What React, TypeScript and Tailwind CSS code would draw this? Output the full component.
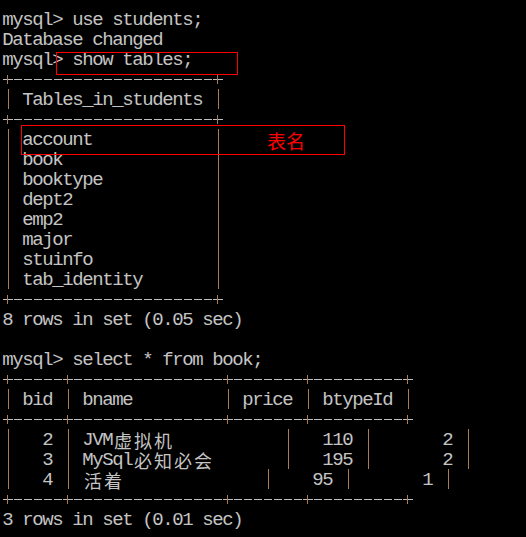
import React from "react";

const lines: string[] = [
  "mysql> use students;",
  "Database changed",
  "mysql> show tables;",
  "+--------------------+",
  "| Tables_in_students |",
  "+--------------------+",
  "| account            |",
  "| book               |",
  "| booktype           |",
  "| dept2              |",
  "| emp2               |",
  "| major              |",
  "| stuinfo            |",
  "| tab_identity       |",
  "+--------------------+",
  "8 rows in set (0.05 sec)",
  "",
  "mysql> select * from book;",
  "+-----+---------------+-------+---------+",
  "| bid | bname         | price | btypeId |",
  "+-----+---------------+-------+---------+",
  "|   2 | JVM虚拟机           |   110 |       2 |",
  "|   3 | MySql必知必会       |   195 |       2 |",
  "|   4 | 活着              |    95 |       1 |",
  "+-----+---------------+-------+---------+",
  "3 rows in set (0.01 sec)",
];

const isWide = (c: string) => /[\u2e80-\u9fff\uf900-\ufaff\uff00-\uffef]/.test(c);

function Cell({ c }: { c: string }) {
  if (c === "|") {
    return (
      <span className="flex h-[20px] w-[10px] shrink-0 justify-center">
        <span className="h-[20px] w-px bg-[#a97c55]" />
      </span>
    );
  }
  if (c === "-") {
    return (
      <span className="flex h-[20px] w-[10px] shrink-0 items-center justify-center">
        <span className="h-px w-[8px] bg-[#c0c0c0]" />
      </span>
    );
  }
  if (c === "+") {
    return (
      <span className="relative flex h-[20px] w-[10px] shrink-0 items-center justify-center">
        <span className="h-px w-[10px] bg-[#c0c0c0]" />
        <span className="absolute left-[4px] top-[6px] h-[9px] w-px bg-[#a97c55]" />
      </span>
    );
  }
  const wide = isWide(c);
  return (
    <span
      className={
        wide
          ? "flex h-[20px] w-[20px] shrink-0 items-center justify-center pt-px text-[18px] leading-[20px] font-['Noto_Sans_CJK_SC',sans-serif]"
          : "flex h-[20px] w-[10px] shrink-0 items-center justify-center whitespace-pre pt-px text-[19px] leading-[20px] font-['Liberation_Mono',monospace]"
      }
    >
      {c === " " ? "\u00a0" : c}
    </span>
  );
}

export default function App() {
  return (
    <div className="relative h-[537px] w-[526px] overflow-hidden bg-black pl-[3px] pt-[9px] text-[#c4c4c4]">
      {lines.map((l, i) => (
        <div key={i} className="flex h-[20px]">
          {[...l].map((c, j) => (
            <Cell key={j} c={c} />
          ))}
        </div>
      ))}
      <div className="absolute left-[56px] top-[52px] h-[23px] w-[182px] border border-[#ff0000]" />
      <div className="absolute left-[21px] top-[125px] flex h-[30px] w-[324px] items-center border border-[#ff0000]">
        <span className="ml-[245px] font-['Noto_Sans_CJK_SC',sans-serif] text-[19px] leading-none text-[#ff0000]">
          表名
        </span>
      </div>
    </div>
  );
}
